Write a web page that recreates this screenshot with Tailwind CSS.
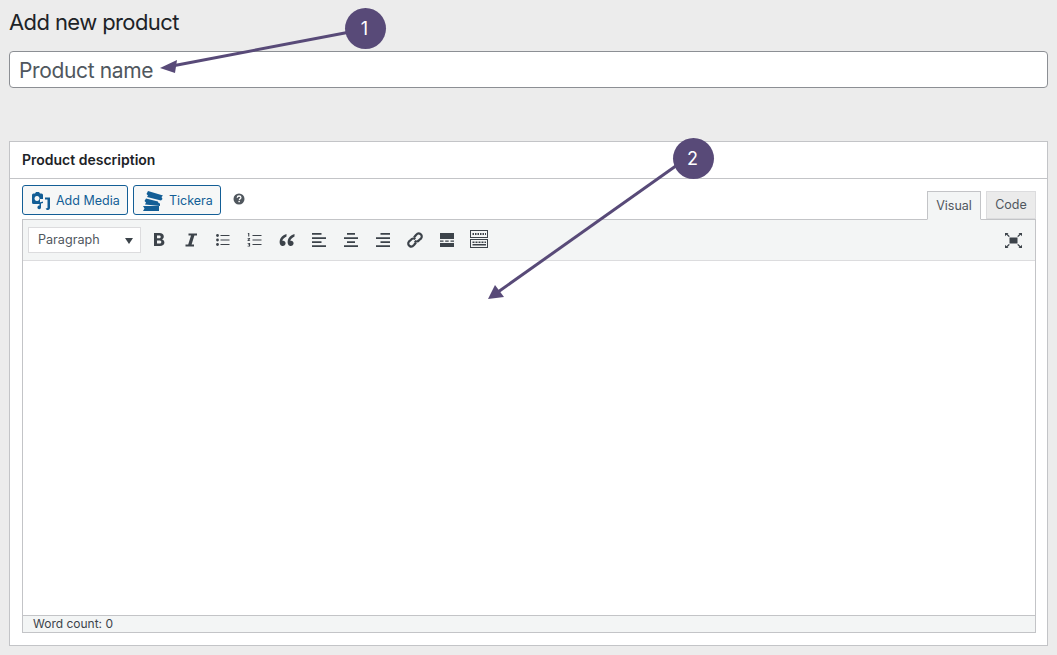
<!DOCTYPE html>
<html lang="en">
<head>
    <meta charset="UTF-8">
    <title>Add new product</title>
    <script src="https://cdn.jsdelivr.net/npm/@tailwindcss/browser@4"></script>
</head>
<body class="relative w-[1057px] h-[655px] overflow-hidden bg-[#ececec] font-['Inter','Liberation_Sans',sans-serif] text-[#1d2327]">
    <div class="flex flex-col px-[9px]">
        <h1 class="h-[51px] pt-[8px] text-[22px] leading-[29px] font-normal tracking-[-0.6px]">Add new product</h1>
        <div class="h-[37px] flex items-center pl-[9px] pt-[3px] bg-white border border-[#8c8f94] rounded-[4px] text-[21px] tracking-[-0.35px] text-[#50575e]">Product name</div>
        <section class="mt-[53px] h-[505px] bg-white border border-[#c3c4c7] flex flex-col">
            <h2 class="h-[37px] shrink-0 flex items-center pl-[12px] pb-[2px] text-[14px] font-semibold border-b border-[#c3c4c7]">Product description</h2>
            <div class="pl-[12px] pr-[11px] pt-[6px] flex flex-col flex-1">
                <div class="h-[34px] flex items-start">
                    <button class="h-[30px] w-[106px] flex items-center gap-[6px] pl-[9px] pt-[3px] bg-[#f6f7f7] border border-[#135e96] rounded-[3px] text-[12.500px] text-[#135e96]">
                        <svg class="w-[18px] h-[18px] -mt-[1px]" viewBox="0 0 18 18" fill="#135e96"><path fill-rule="evenodd" d="M1.500 1.500H3L4 0h3l1 1.500h1.500A1.500 1.500 0 0 1 11 3v4H8v5H1.500A1.500 1.500 0 0 1 0 10.500V3a1.500 1.500 0 0 1 1.500-1.500zM5 4a2.500 2.500 0 1 0 .01 0z"/><path d="M7.500 10.500l3.500-1v1.500l-2 .6v3.700a1.800 1.800 0 1 1-1.500-1.700zM13 5.500h5v10.300a2.200 2.200 0 0 1-4.300.7l1.800-.5V7.500H13z"/></svg>
                        Add Media
                    </button>
                    <button class="ml-[5px] h-[30px] w-[88px] flex items-center gap-[5px] pl-[9px] pt-[3px] bg-[#f6f7f7] border border-[#135e96] rounded-[3px] text-[12.500px] text-[#135e96]">
                        <svg class="w-[21px] h-[20px] -mt-[1px]" viewBox="0 0 21 20" fill="#135e96"><path d="M5 0l15 4.500-1.500 1.500 1 2-1.500 1.500L4 6l1-1.500L3.500 3zM3 7.500l12 3 .5 1.500 1.500.5V15L2 13.500l1-2-1.500-1.500zM0 15h16v5H0l1.500-2.500z"/></svg>
                        Tickera
                    </button>
                    <svg class="ml-[12px] mt-[8px] w-[12px] h-[12px]" viewBox="0 0 12 12"><circle cx="6" cy="6" r="5.500" fill="#50575e"/><path d="M4.200 4.700C4.300 3.600 5 3 6.100 3c1.100 0 1.800.6 1.800 1.500 0 1.300-1.500 1.300-1.500 2.500" fill="none" stroke="#fff" stroke-width="1.300"/><rect x="5.400" y="7.800" width="1.500" height="1.400" fill="#fff"/></svg>
                    <div class="ml-auto flex items-end self-stretch gap-[5px] -mb-[1px] relative z-10 pt-[6px]">
                        <div class="w-[54px] h-[29px] flex items-center justify-center pt-[2px] bg-[#f3f5f5] border border-[#c3c4c7] border-b-[#f3f5f5] text-[12.500px] text-[#50575e]">Visual</div>
                        <div class="w-[50px] h-[28px] mb-[1px] flex items-center justify-center pt-[1px] bg-[#ebebeb] border border-[#dcdcde] text-[12.500px] text-[#50575e]">Code</div>
                    </div>
                </div>
                <div class="border border-[#c3c4c7] h-[414px] flex flex-col">
                    <div class="h-[41px] shrink-0 flex items-center bg-[#f3f5f5] border-b border-[#dcdcde] pl-[5px] pr-[13px]">
                        <div class="w-[113px] h-[26px] flex items-center justify-between pl-[9px] pr-[6px] bg-white border border-[#dcdcde] text-[12.600px] text-[#50575e]">
                            Paragraph
                            <span class="w-0 h-0 border-x-[4px] border-x-transparent border-t-[6px] border-t-[#3c434a] mt-[2px] mr-[1px]"></span>
                        </div>
                        <div class="ml-[2px] flex">
                            <span class="w-[32px] flex justify-center"><svg class="w-[20px] h-[20px]" viewBox="0 0 20 20" fill="#3c434a"><path fill-rule="evenodd" d="M5 3h5.500c2.700 0 4.300 1.300 4.300 3.400 0 1.400-.7 2.400-2 2.900 1.600.4 2.600 1.700 2.600 3.200 0 2.300-1.800 3.500-4.600 3.500H5zM8 5.400v2.900h2c1.100 0 1.700-.5 1.700-1.500S11.100 5.400 10 5.400zm0 5.100v3.100h2.300c1.300 0 2-.6 2-1.600s-.7-1.500-2-1.500z"/></svg></span>
                            <span class="w-[32px] flex justify-center"><svg class="w-[20px] h-[20px]" viewBox="0 0 20 20" fill="#3c434a"><path d="M7.500 3.500H16v2h-2.600L10.600 14.500H13v2H4.500v-2h2.700l2.800-9H7.500z"/></svg></span>
                            <span class="w-[32px] flex justify-center"><svg class="w-[20px] h-[20px]" viewBox="0 0 20 20" fill="#3c434a"><circle cx="4.500" cy="5.500" r="1.400"/><circle cx="4.500" cy="10" r="1.400"/><circle cx="4.500" cy="14.500" r="1.400"/><path d="M7.500 5h9v1h-9zM7.500 9.500h9v1h-9zM7.500 14h9v1h-9z"/></svg></span>
                            <span class="w-[32px] flex justify-center"><svg class="w-[20px] h-[20px]" viewBox="0 0 20 20" fill="#3c434a"><path d="M3.200 3h1.100v3.500H3.200V4h-.6zM2.600 8h2.500v.9l-1.400 1.300h1.400V11H2.600v-.9L4 8.800H2.600zM2.600 13h2.500v3.500H2.600v-.8h1.400v-.6H3v-.7h1v-.6H2.600zM7.500 5h9v1h-9zM7.500 9.500h9v1h-9zM7.500 14h9v1h-9z"/></svg></span>
                            <span class="w-[32px] flex justify-center"><svg class="w-[20px] h-[20px]" viewBox="0 0 20 20" fill="#3c434a"><path d="M9.500 4C6 5 3.200 7.500 2.700 11c-.4 2.700.9 5 3 5 1.600 0 2.900-1.100 2.900-2.700 0-1.500-1.100-2.600-2.500-2.600-.3 0-.6 0-.8.100.4-1.800 1.900-3.200 4.200-4.300zM17.500 4c-3.500 1-6.300 3.500-6.800 7-.4 2.700.9 5 3 5 1.600 0 2.900-1.100 2.900-2.700 0-1.500-1.100-2.600-2.500-2.600-.3 0-.6 0-.8.100.4-1.800 1.900-3.200 4.200-4.300z"/></svg></span>
                            <span class="w-[32px] flex justify-center"><svg class="w-[20px] h-[20px]" viewBox="0 0 20 20" fill="#3c434a"><path d="M3 3h9.500v1.800H3zM3 7.200h14V9H3zM3 11.200h9.500V13H3zM3 15.200h14V17H3z"/></svg></span>
                            <span class="w-[32px] flex justify-center"><svg class="w-[20px] h-[20px]" viewBox="0 0 20 20" fill="#3c434a"><path d="M6 3h8v1.800H6zM3 7.200h14V9H3zM6 11.200h8V13H6zM3 15.200h14V17H3z"/></svg></span>
                            <span class="w-[32px] flex justify-center"><svg class="w-[20px] h-[20px]" viewBox="0 0 20 20" fill="#3c434a"><path d="M7.500 3H17v1.800H7.500zM3 7.200h14V9H3zM7.500 11.200H17V13H7.500zM3 15.200h14V17H3z"/></svg></span>
                            <span class="w-[32px] flex justify-center"><svg class="w-[20px] h-[20px]" viewBox="0 0 20 20" fill="none" stroke="#3c434a" stroke-width="2.200"><path d="M9 7.500l2-2.500c1.300-1.500 3-2 4.400-1 1.500 1 1.800 2.900.7 4.400L14 10.200c-1.200 1.500-3 1.700-4.300.6"/><path d="M11 12.500l-2 2.500c-1.300 1.500-3 2-4.400 1-1.500-1-1.800-2.900-.7-4.400L6 9.800c1.200-1.500 3-1.700 4.300-.6"/></svg></span>
                            <span class="w-[32px] flex justify-center"><svg class="w-[20px] h-[20px]" viewBox="0 0 20 20" fill="#3c434a"><path d="M3 3h14v6H3zM3 10.500h3.500v1.200H3zM8.200 10.500h3.500v1.200H8.200zM13.500 10.500H17v1.200h-3.500zM3 13h14v4H3z"/></svg></span>
                            <span class="w-[32px] flex justify-center"><svg class="w-[20px] h-[18px]" viewBox="0 0 20 18" fill="#3c434a"><path fill-rule="evenodd" d="M1 0h18v8H1zm1 1v6h16V1zM1 9h18v9H1zm1 1v7h16v-7z"/><path d="M3.500 3h1.500v2H3.500zM6 3h1.500v2H6zM8.500 3H10v2H8.500zM11 3h1.500v2H11zM13.500 3H15v2h-1.500zM16 3h1v2h-1zM3.500 11.500h2V13h-2zM6.500 11.500h2V13h-2zM9.500 11.500h2V13h-2zM12.500 11.500h2V13h-2zM15.500 11.500H17V13h-1.500zM3.500 14h13.500v1.500H3.500z"/></svg></span>
                        </div>
                        <svg class="ml-auto w-[17px] h-[15px]" viewBox="0 0 17 15" fill="#3c434a"><rect x="4.500" y="4.500" width="8" height="6"/><path d="M0 0h3.500L2.500 1 4.800 3.300 3.800 4 1.400 1.800 0 3.200zM17 0h-3.500l1 1-2.300 2.300 1 .7 2.400-2.200L17 3.200zM0 15h3.500l-1-1 2.300-2.300-1-.7-2.400 2.200L0 11.800zM17 15h-3.500l1-1-2.300-2.300 1-.7 2.400 2.200 1.400-1.400z"/></svg>
                    </div>
                    <div class="flex-1 bg-white"></div>
                    <div class="h-[17px] shrink-0 flex items-center pl-[10px] bg-[#f3f5f5] border-t border-[#c3c4c7] text-[12px] text-[#3c434a]">Word count: 0</div>
                </div>
            </div>
        </section>
    </div>

    <!-- callouts sit over the form -->
    <svg class="absolute left-0 top-0 w-[1057px] h-[655px] pointer-events-none" viewBox="0 0 1057 655">
        <path d="M350 32L172 66" stroke="#584a78" stroke-width="3" fill="none"/>
        <path d="M160 68L177 60L175 73Z" fill="#584a78"/>
        <path d="M680 163L498 292" stroke="#584a78" stroke-width="3" fill="none"/>
        <path d="M488 299L495 285L504 297Z" fill="#584a78"/>
    </svg>
    <div class="absolute left-[345px] top-[8px] w-[41px] h-[41px] pr-[2px] rounded-full bg-[#584a78] flex items-center justify-center text-[18px] text-white">1</div>
    <div class="absolute left-[673px] top-[138px] w-[41px] h-[41px] pr-[2px] rounded-full bg-[#584a78] flex items-center justify-center text-[18px] text-white">2</div>
</body>
</html>
